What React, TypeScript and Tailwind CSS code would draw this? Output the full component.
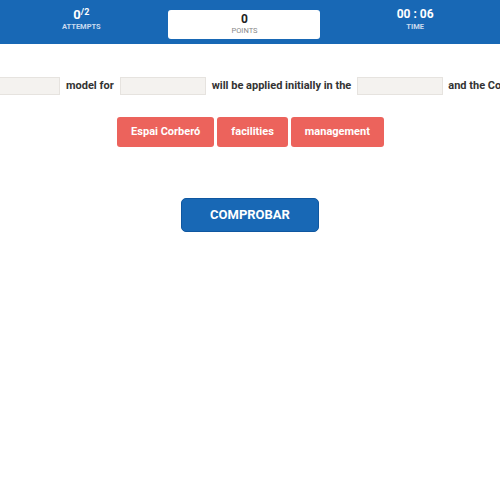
const font = { fontFamily: '"Roboto", "Liberation Sans", sans-serif' };

const Blank = () => (
  <span className="inline-block h-[18px] w-[86px] shrink-0 border border-[#e6e3df] bg-[#f4f2ef]" />
);

const Chip = ({ label }: { label: string }) => (
  <div className="flex h-[30px] items-center rounded-[3px] bg-[#ec635c] px-[14px] text-[11px] font-bold text-white">
    {label}
  </div>
);

export default function App() {
  return (
    <div className="h-[500px] w-[500px] overflow-hidden bg-white" style={font}>
      <header className="grid h-[44px] grid-cols-3 bg-[#1868b5] text-white">
        <div className="flex flex-col items-center pt-[7px] pr-[4px]">
          <div className="text-[13px] font-bold leading-[15px]">
            0<sup className="text-[9px]">/2</sup>
          </div>
          <div className="text-[7.5px] font-bold leading-[10px] text-[#c9dbef]">ATTEMPTS</div>
        </div>
        <div className="flex items-start justify-center pt-[10px]">
          <div className="-ml-[11px] flex h-[29px] w-[152px] flex-col items-center rounded-[3px] bg-white pt-[2px]">
            <div className="text-[12px] font-bold leading-[14px] text-[#222]">0</div>
            <div className="text-[7.5px] leading-[10px] text-[#888]">POINTS</div>
          </div>
        </div>
        <div className="flex flex-col items-center pt-[7px] pr-[3px]">
          <div className="text-[12px] font-bold leading-[15px]">00 : 06</div>
          <div className="text-[7.5px] font-bold leading-[10px] text-[#c9dbef]">TIME</div>
        </div>
      </header>

      <div className="mt-[33px] flex items-center whitespace-nowrap text-[11px] font-bold text-[#333]" style={{ marginLeft: -26 }}>
        <Blank />
        <span className="px-[6px]">model for</span>
        <Blank />
        <span className="px-[6px]">will be applied initially in the</span>
        <Blank />
        <span className="px-[5px]">and the Corberó Space</span>
      </div>

      <div className="mt-[22px] flex justify-center gap-[3px] pl-[1px]">
        <Chip label="Espai Corberó" />
        <Chip label="facilities" />
        <Chip label="management" />
      </div>

      <div className="mt-[51px] flex justify-center">
        <button className="h-[34px] w-[138px] rounded-[5px] border border-[#0f57a0] bg-[#1868b5] text-[13px] font-bold text-white">
          COMPROBAR
        </button>
      </div>
    </div>
  );
}
